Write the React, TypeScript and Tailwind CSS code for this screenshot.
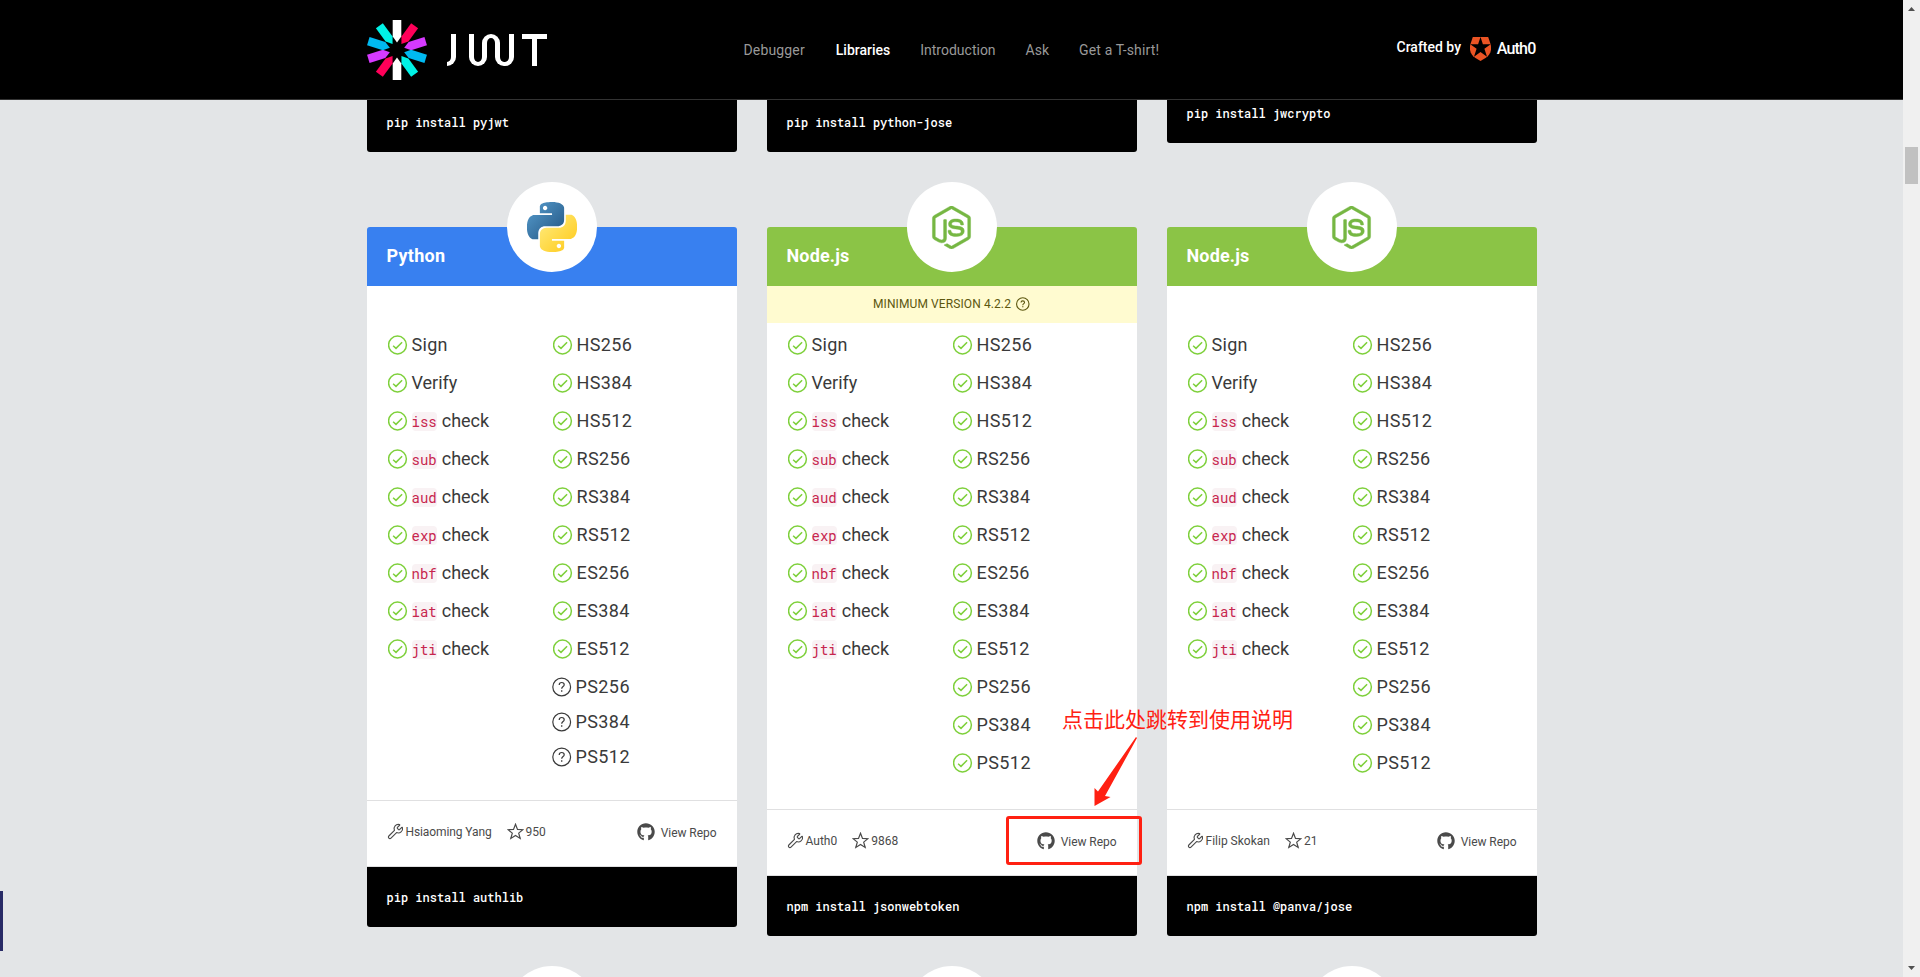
import type { ReactNode } from "react";
import { Wrench } from "lucide-react";
import { FaGithub } from "react-icons/fa";
import { SiNodedotjs } from "react-icons/si";

type Algorithm = { name: string; unknown?: boolean };

type Library = {
  language: "Python" | "Node.js";
  minimumVersion?: string;
  author: string;
  stars: string;
  install: string;
  algorithms: Algorithm[];
};

const CLAIMS = ["iss", "sub", "aud", "exp", "nbf", "iat", "jti"];

const BASE = ["HS256", "HS384", "HS512", "RS256", "RS384", "RS512", "ES256", "ES384", "ES512"];
const PS = ["PS256", "PS384", "PS512"];

const allSupported: Algorithm[] = [...BASE, ...PS].map((name) => ({ name }));
const psUnknown: Algorithm[] = [
  ...BASE.map((name) => ({ name })),
  ...PS.map((name) => ({ name, unknown: true })),
];

const LIBRARIES: Library[] = [
  { language: "Python", author: "Hsiaoming Yang", stars: "950", install: "pip install authlib", algorithms: psUnknown },
  { language: "Node.js", minimumVersion: "4.2.2", author: "Auth0", stars: "9868", install: "npm install jsonwebtoken", algorithms: allSupported },
  { language: "Node.js", author: "Filip Skokan", stars: "21", install: "npm install @panva/jose", algorithms: allSupported },
];

const PETALS = ["#ffffff", "#ff0059", "#d63aff", "#00b9f1", "#00f2e6", "#ffffff", "#ff0059", "#d63aff", "#00b9f1", "#00f2e6"];
const PETAL_ANGLES = [0, 36, 73, 107, 144, 180, 216, 253, 287, 324];

function JwtWheel() {
  return (
    <svg width="60" height="60" viewBox="-30 -30 60 60">
      {PETALS.map((fill, i) => (
        <path key={i} d="M-4.300 -30H4.300V-13.500L0 -7.500L-4.300 -13.500Z" fill={fill} transform={`rotate(${PETAL_ANGLES[i]})`} />
      ))}
    </svg>
  );
}

function JwtWordmark() {
  return (
    <div role="img" aria-label="JWT" className="ml-5 flex h-8 items-start">
      <div className="h-8 w-[9px] rounded-br-[9px] border-r-[5px] border-b-[4px] border-white" />
      <div className="ml-[13px] flex w-[18px] flex-col">
        <div className="h-4 w-[5px] bg-white" />
        <div className="h-4 w-full rounded-b-[9px] border-x-[5px] border-b-[4px] border-white" />
      </div>
      <div className="-ml-[5px] h-4 w-[18px] rounded-t-[9px] border-x-[5px] border-t-[4px] border-white" />
      <div className="-ml-[5px] flex w-[19px] flex-col items-end">
        <div className="h-4 w-[5px] bg-white" />
        <div className="h-4 w-full rounded-b-[9px] border-x-[5px] border-b-[4px] border-white" />
      </div>
      <div className="ml-2 flex w-[25px] flex-col items-center">
        <div className="h-[5px] w-full bg-white" />
        <div className="h-[27px] w-[5px] bg-white" />
      </div>
    </div>
  );
}

function Auth0Shield() {
  return (
    <svg width="21" height="24" viewBox="0 0 21 24">
      <path d="M2.800 0H18.200L20.600 7.300C22.200 13 20 17.800 15.900 20.700L10.500 24L5.100 20.700C1 17.800 -1.200 13 0.400 7.300Z" fill="#eb5424" />
      <path d="M10.500 0L12.900 7.300H20.700L14.400 11.800L17 19.800L10.500 15L4 19.800L6.600 11.800L0.300 7.300H8.100Z" fill="#000" />
    </svg>
  );
}

const PYTHON_HALF =
  "M14.25.18l.9.2.73.26.59.3.45.32.34.34.25.34.16.33.1.3.04.26.02.2-.01.13V8.5l-.05.63-.13.55-.21.46-.26.38-.3.31-.33.25-.35.19-.35.14-.33.1-.3.07-.26.04-.21.02H8.77l-.69.05-.59.14-.5.22-.41.27-.33.32-.27.35-.2.36-.15.37-.1.35-.07.32-.04.27-.02.21v3.06H3.17l-.21-.03-.28-.07-.32-.12-.35-.18-.36-.26-.36-.36-.35-.46-.32-.59-.28-.73-.21-.88-.14-1.05-.05-1.23.06-1.22.16-1.04.24-.87.32-.71.36-.57.4-.44.42-.33.42-.24.4-.16.36-.1.32-.05.24-.01h.16l.06.01h8.16v-.83H6.18l-.01-2.75-.02-.37.05-.34.11-.31.17-.28.25-.26.31-.23.38-.2.44-.18.51-.15.58-.12.64-.1.71-.06.77-.04.84-.02 1.27.05zm-6.3 1.98l-.23.33-.08.41.08.41.23.34.33.22.41.09.41-.09.33-.22.23-.34.08-.41-.08-.41-.23-.33-.33-.22-.41-.09-.41.09z";

function PythonLogo() {
  return (
    <svg width="50" height="50" viewBox="0 0 24 24">
      <defs>
        <linearGradient id="py-blue" x1="0" y1="0" x2="0.8" y2="0.8">
          <stop offset="0.15" stopColor="#5195c6" />
          <stop offset="1" stopColor="#2b618f" />
        </linearGradient>
        <linearGradient id="py-yellow" x1="0.85" y1="0.85" x2="0.2" y2="0.2">
          <stop offset="0" stopColor="#ffe873" />
          <stop offset="1" stopColor="#ffd02b" />
        </linearGradient>
      </defs>
      <path d={PYTHON_HALF} fill="url(#py-blue)" />
      <path d={PYTHON_HALF} fill="url(#py-yellow)" transform="rotate(180 12 12)" />
    </svg>
  );
}

function CheckIcon() {
  return (
    <svg width="20" height="20" viewBox="0 0 20 20" fill="none" stroke="#7ed03b" className="mb-px shrink-0">
      <circle cx="9.500" cy="10" r="8.900" strokeWidth="1.500" />
      <path d="M5.100 10.800L8 13.400L14.100 7.200" strokeWidth="1.500" />
    </svg>
  );
}

function QuestionIcon({ size, weight }: { size: number; weight: number }) {
  return (
    <svg width={size} height={size} viewBox="0 0 20 20" fill="none" stroke="currentColor" className="shrink-0">
      <circle cx="9.700" cy="10" r="8.900" strokeWidth={weight} />
      <path d="M7.200 7.900C7.200 6.300 8.300 5.500 9.700 5.500C11.100 5.500 12.200 6.400 12.200 7.700C12.200 9.500 9.700 9.600 9.700 11.800" strokeWidth={weight} />
      <path d="M9.700 13.200V14.800" strokeWidth={weight * 1.1} />
    </svg>
  );
}

function StarIcon() {
  return (
    <svg width="17" height="17" viewBox="0 0 17 17" fill="none" stroke="#4a4a4a" strokeWidth="1.200">
      <path d="M8.500 1.300L10.500 6.400L15.900 6.700L11.700 10.100L13.200 15.500L8.500 12.500L3.800 15.500L5.300 10.100L1.100 6.700L6.500 6.400Z" />
    </svg>
  );
}

function Feature({ children }: { children: ReactNode }) {
  return (
    <li className="flex h-[38px] items-center gap-1 pl-px">
      <CheckIcon />
      <span className="flex items-center">{children}</span>
    </li>
  );
}

function InstallBar({ command }: { command: string }) {
  return (
    <div className="flex h-[60px] shrink-0 items-center rounded-b-[3px] bg-black px-5 font-['Roboto_Mono','Liberation_Mono',monospace] text-xs font-medium text-white">
      {command}
    </div>
  );
}

function LogoBadge({ children }: { children?: ReactNode }) {
  return (
    <div className="absolute -top-[45px] left-[140px] flex size-[90px] items-center justify-center rounded-full bg-white">
      {children}
    </div>
  );
}

function LibraryCard({ lib }: { lib: Library }) {
  const isPython = lib.language === "Python";
  return (
    <article className="relative w-[370px]">
      <LogoBadge>
        {isPython ? <PythonLogo /> : <SiNodedotjs size={43} color="#76b743" stroke="#76b743" strokeWidth={0.25} />}
      </LogoBadge>
      <h2
        className={`flex h-[59px] items-center rounded-t-[3px] px-5 pb-0.5 text-lg font-bold text-white ${
          isPython ? "bg-[#3880f0] tracking-[0.25px]" : "bg-[#8bc446] tracking-[0.15px]"
        }`}
      >
        {lib.language}
      </h2>
      <div className="bg-white">
        <div className="h-10">
          {lib.minimumVersion && (
            <div className="flex h-[37px] items-center justify-center gap-[5px] bg-[#fffbd0] pb-px text-xs text-[#5c570f]">
              <span className="tracking-[0.1px]">MINIMUM VERSION {lib.minimumVersion}</span>
              <QuestionIcon size={14} weight={1.6} />
            </div>
          )}
        </div>
        <div className={`flex px-5 text-lg leading-none text-[#3a3a3a] ${isPython ? "pb-[26px]" : "pb-[27px]"}`}>
          <ul className="w-[165px]">
            <Feature><span className="tracking-[0.3px]">Sign</span></Feature>
            <Feature>Verify</Feature>
            {CLAIMS.map((claim) => (
              <Feature key={claim}>
                <code className="mr-[5px] rounded bg-[#f9f2f4] py-0.5 font-['Roboto_Mono','Liberation_Mono',monospace] text-sm leading-[15px] text-[#c7254e]">
                  {claim}
                </code>
                check
              </Feature>
            ))}
          </ul>
          <ul className="tracking-[0.4px]">
            {lib.algorithms.map((alg, i) =>
              alg.unknown ? (
                <li key={alg.name} className={`flex h-[35px] items-center gap-1 ${i === 9 ? "mt-px" : ""}`}>
                  <QuestionIcon size={20} weight={1.2} />
                  {alg.name}
                </li>
              ) : (
                <Feature key={alg.name}>{alg.name}</Feature>
              ),
            )}
          </ul>
        </div>
        <div className="flex h-[67px] items-center justify-between border-y border-[#e0e0e1] px-5 pb-0.5 text-xs text-[#4a4a4a]">
          <div className="flex items-center pb-0.5">
            <Wrench size={17} strokeWidth={1.6} />
            <span className={`ml-0.5 ${isPython ? "tracking-[-0.1px]" : ""}`}>{lib.author}</span>
            <span className="ml-[15px] flex items-center gap-0.5">
              <StarIcon />
              {lib.stars}
            </span>
          </div>
          <a className="flex items-center gap-1.5">
            <FaGithub size={18} className="mb-0.5" />
            <span className="tracking-[-0.05px]">View Repo</span>
          </a>
        </div>
      </div>
      <InstallBar command={lib.install} />
    </article>
  );
}

function Header() {
  return (
    <header className="flex h-[100px] shrink-0 justify-center border-b border-[#333] bg-black">
      <div className="flex w-[1170px] items-center">
        <div className="flex w-[377px] items-center">
          <JwtWheel />
          <JwtWordmark />
        </div>
        <nav className="flex w-[653px] gap-[31px] text-sm text-[#999]">
          <a className="tracking-[0.15px]">Debugger</a>
          <a className="font-medium text-white">Libraries</a>
          <a className="-ml-px">Introduction</a>
          <a className="-ml-px">Ask</a>
          <a className="-ml-px tracking-[0.15px]">Get a T-shirt!</a>
        </nav>
        <div className="flex flex-1 items-center text-white">
          <span className="mb-1.5 text-sm font-medium">Crafted by</span>
          <span className="mr-px mb-0.5 ml-auto flex items-center gap-1.5">
            <Auth0Shield />
            <span className="text-base leading-none font-medium tracking-[-0.8px]">Auth0</span>
          </span>
        </div>
      </div>
    </header>
  );
}

function Scrollbar() {
  return (
    <div className="flex w-[17px] shrink-0 flex-col items-center justify-between bg-[#f0f0f0] py-[7px]">
      <svg width="7" height="4" viewBox="0 0 7 4" fill="#505050"><path d="M3.500 0L7 4H0Z" /></svg>
      <div className="mb-auto mt-[136px] h-[37px] w-[13px] bg-[#c1c1c1]" />
      <svg width="7" height="4" viewBox="0 0 7 4" fill="#505050"><path d="M0 0H7L3.500 4Z" /></svg>
    </div>
  );
}

function Annotation() {
  return (
    <div className="pointer-events-none absolute inset-0 text-[#ff2012]">
      <p className="absolute top-[702px] left-[1062px] font-['Noto_Sans_CJK_SC',sans-serif] text-[21px] leading-8 font-normal whitespace-nowrap">
        点击此处跳转到使用说明
      </p>
      <svg className="absolute top-[736px] left-[1090px]" width="50" height="72" viewBox="1090 736 50 72" fill="#ff2012">
        <path d="M1136 737L1137 738L1105 796L1110.500 797L1094.500 806V788L1098 791.500Z" />
      </svg>
      <div className="absolute top-[816px] left-[1006px] h-[49px] w-[136px] rounded-[3px] border-[3px] border-[#ff2012]" />
    </div>
  );
}

export default function App() {
  return (
    <div className="relative flex h-[977px] w-[1920px] overflow-hidden font-[Roboto,'Liberation_Sans',sans-serif]">
      <div className="flex min-w-0 flex-1 flex-col">
        <Header />
        <main className="flex min-h-0 flex-1 flex-col items-center overflow-hidden bg-[#e3e5e7]">
          <div className="flex h-[52px] shrink-0 items-start gap-[30px]">
            <div className="flex h-[52px] w-[370px] flex-col justify-end overflow-hidden"><InstallBar command="pip install pyjwt" /></div>
            <div className="flex h-[52px] w-[370px] flex-col justify-end overflow-hidden"><InstallBar command="pip install python-jose" /></div>
            <div className="flex h-[43px] w-[370px] flex-col justify-end overflow-hidden"><InstallBar command="pip install jwcrypto" /></div>
          </div>
          <div className="mt-[75px] flex shrink-0 items-start gap-[30px]">
            {LIBRARIES.map((lib) => (
              <LibraryCard key={lib.install} lib={lib} />
            ))}
          </div>
          <div className="mt-[75px] flex shrink-0 gap-[30px]">
            {[0, 1, 2].map((i) => (
              <div key={i} className="relative h-[59px] w-[370px]"><LogoBadge /></div>
            ))}
          </div>
        </main>
      </div>
      <Scrollbar />
      <div className="absolute top-[891px] left-0 h-[60px] w-[3px] bg-[#282a66]" />
      <Annotation />
    </div>
  );
}
